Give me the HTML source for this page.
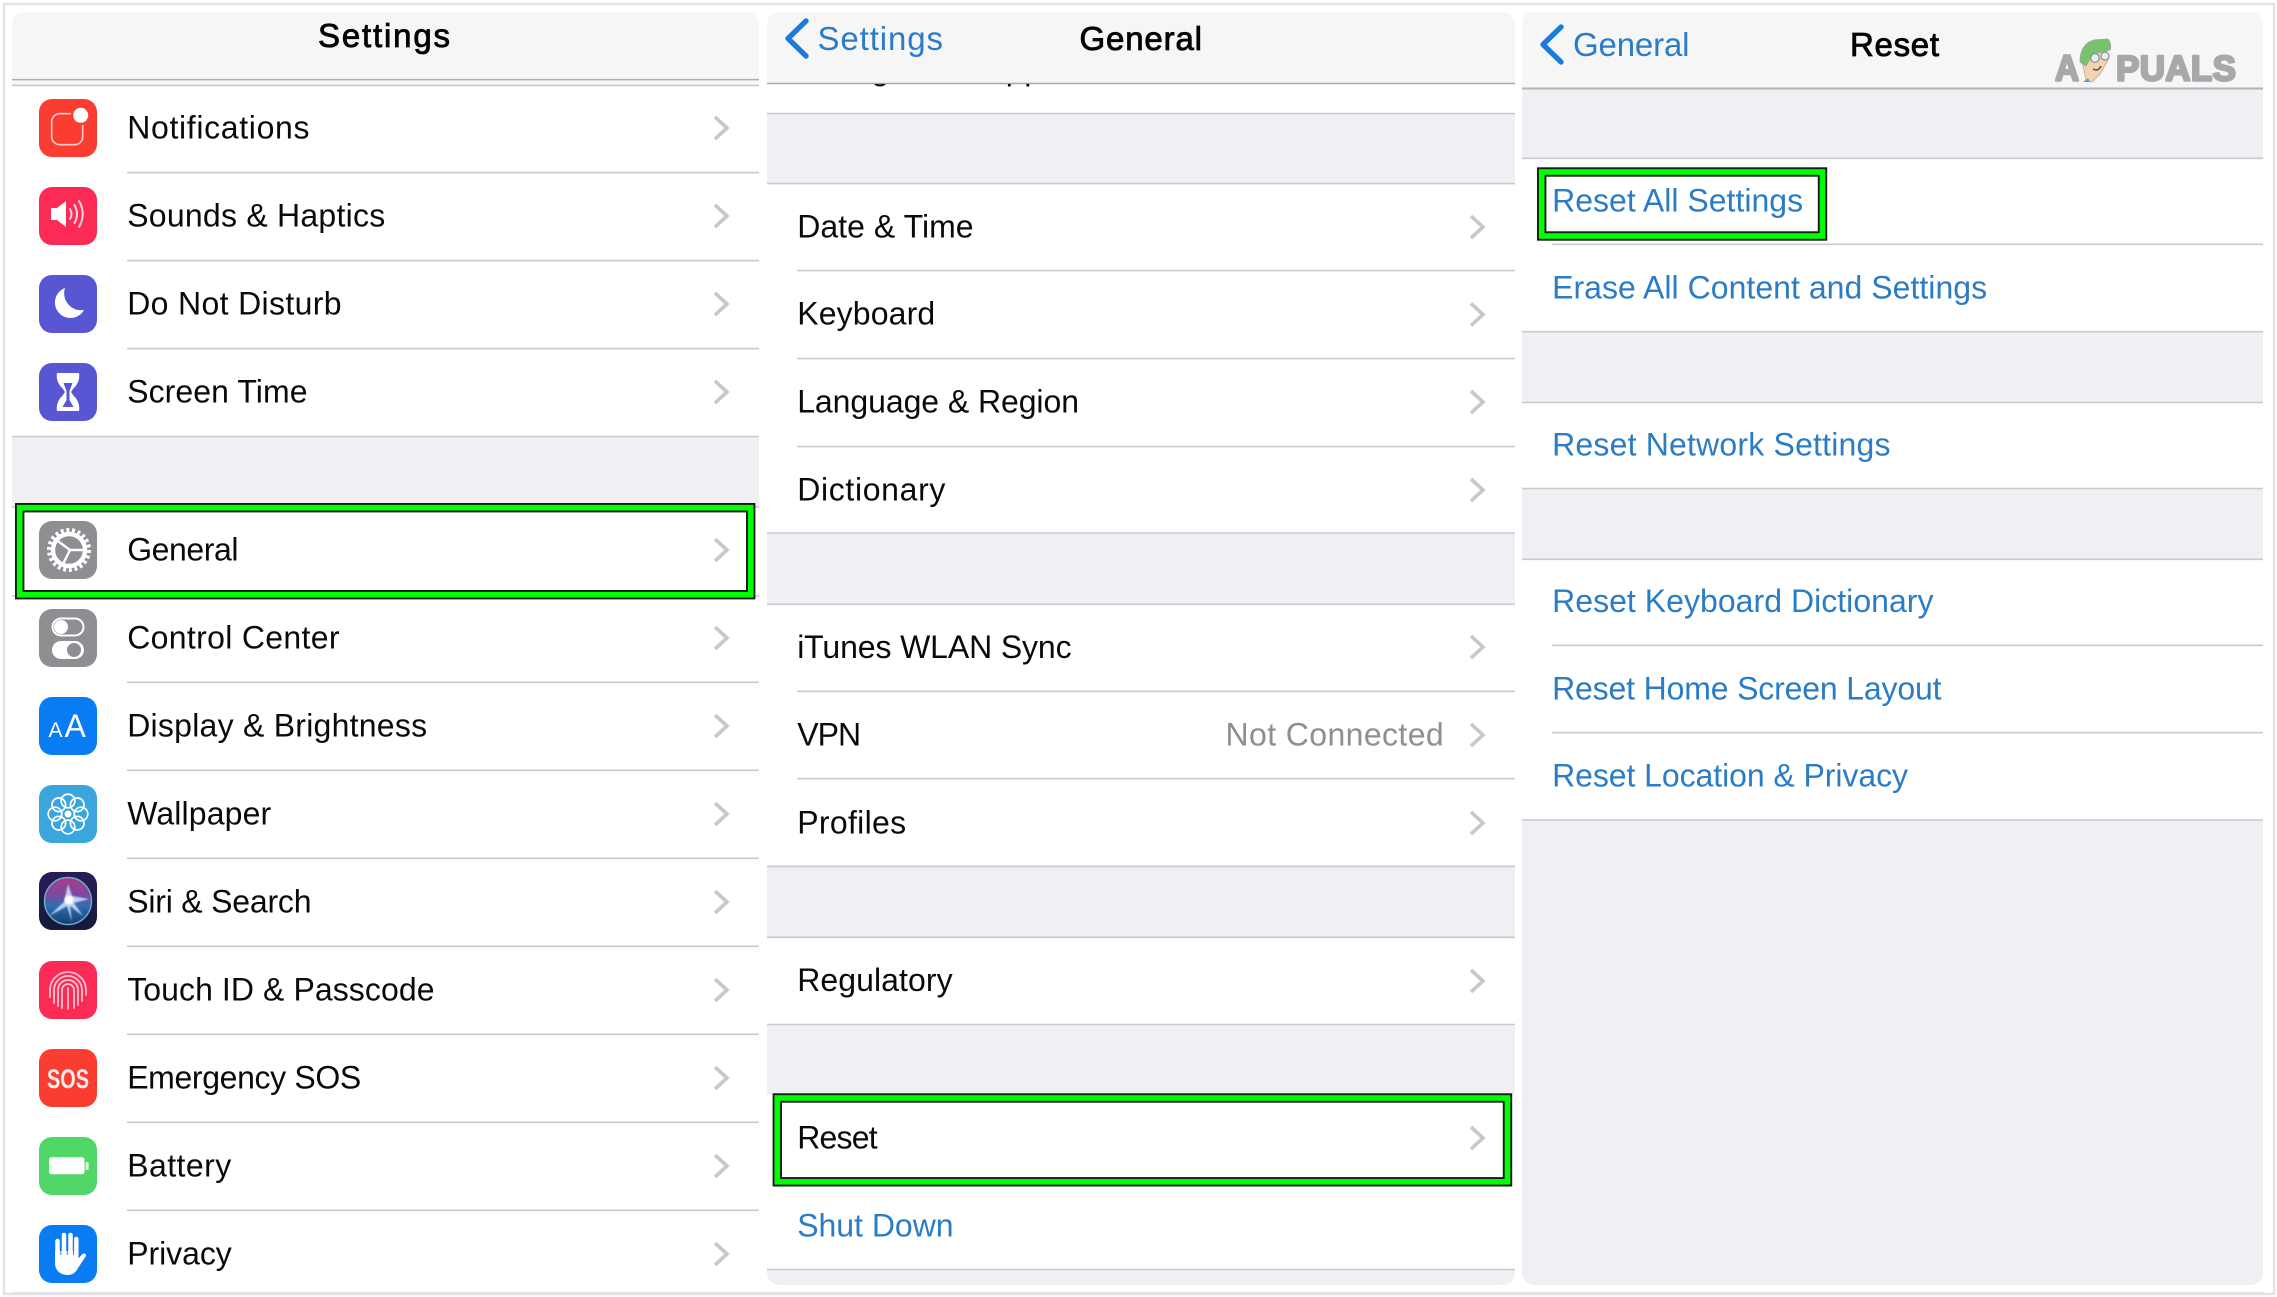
<!DOCTYPE html>
<html lang="en"><head><meta charset="utf-8"><title>iPhone Reset Settings</title>
<style>
html,body{margin:0;padding:0;background:#fff;width:2277px;height:1297px;overflow:hidden}
svg{display:block;font-family:"Liberation Sans",sans-serif}
.t{font-size:32px;fill:#0a0a0a}
.b{font-size:32px;fill:#2b7cc6}
.h{font-size:33px;fill:#050505;stroke:#050505;stroke-width:.85px}
.l{stroke:#c9c9ce;stroke-width:1.6;fill:none}
.c{stroke:#c7c7cc;stroke-width:3.6;fill:none}
.w{fill:none;stroke:#fff}
</style></head><body>
<svg width="2277" height="1297" viewBox="0 0 2277 1297" xmlns="http://www.w3.org/2000/svg">
<defs>
<clipPath id="cp2"><rect x="767" y="84" width="748" height="8"/></clipPath>
<linearGradient id="siri" x1="0" y1="0" x2="0" y2="1"><stop offset="0" stop-color="#a83a8c"/><stop offset=".38" stop-color="#7c4aa0"/><stop offset=".6" stop-color="#2f6fb0"/><stop offset="1" stop-color="#163c70"/></linearGradient>
<linearGradient id="sirib" x1="0" y1="0" x2="0" y2="1"><stop offset="0" stop-color="#2a1c58"/><stop offset="1" stop-color="#141a3a"/></linearGradient>
<filter id="soft" x="-30%" y="-30%" width="160%" height="160%"><feGaussianBlur stdDeviation=".8"/></filter>
</defs>
<rect width="2277" height="1297" fill="#fff"/>
<!-- outer frame -->
<path d="M4 1294V4H2274V1294H4Z" fill="none" stroke="#e3e3e5" stroke-width="2.4"/>

<!-- panel 1 -->
<path d="M12 1293V26Q12 12 26 12H745Q759 12 759 26V1293Z" fill="#fff"/>
<path d="M12 80V26Q12 12 26 12H745Q759 12 759 26V80Z" fill="#f6f6f7"/>
<rect x="12" y="80" width="747" height="5" fill="#f7f7f8"/>
<line x1="12" x2="759" y1="79.6" y2="79.6" stroke="#aeaeb2" stroke-width="1.5"/>
<line x1="12" x2="759" y1="85.4" y2="85.4" class="l"/>
<rect x="12" y="436.5" width="747" height="70.5" fill="#efeff4"/>
<line x1="12" x2="759" y1="436.5" y2="436.5" class="l"/>
<line x1="12" x2="759" y1="507" y2="507" class="l"/>
<line x1="12" x2="759" y1="596" y2="596" class="l"/>
<path class="l" d="M127 172.6H759M127 260.6H759M127 348.6H759M127 682.3H759M127 770.3H759M127 858.3H759M127 946.3H759M127 1034.3H759M127 1122.3H759M127 1210.3H759"/>
<line x1="12" x2="2264" y1="1293" y2="1293" stroke="#e3e3e5" stroke-width="2"/>

<text class="h" x="318" y="47" textLength="132">Settings</text>
<text class="t" x="127.2" y="138.6" textLength="182.3">Notifications</text>
<text class="t" x="127.2" y="226.6" textLength="258">Sounds &amp; Haptics</text>
<text class="t" x="127.2" y="314.6" textLength="214.3">Do Not Disturb</text>
<text class="t" x="127.2" y="402.6" textLength="180.3">Screen Time</text>
<text class="t" x="127.2" y="560.6" textLength="111.3">General</text>
<text class="t" x="127.2" y="648.6" textLength="212.3">Control Center</text>
<text class="t" x="127.2" y="736.6" textLength="299.9">Display &amp; Brightness</text>
<text class="t" x="127.2" y="824.6" textLength="144">Wallpaper</text>
<text class="t" x="127.2" y="912.6" textLength="184.3">Siri &amp; Search</text>
<text class="t" x="127.2" y="1000.6" textLength="307.3">Touch ID &amp; Passcode</text>
<text class="t" x="127.2" y="1088.6" textLength="234">Emergency SOS</text>
<text class="t" x="127.2" y="1176.6" textLength="104">Battery</text>
<text class="t" x="127.2" y="1264.6" textLength="104.6">Privacy</text>
<path class="c" d="M715 117L727 128L715 139M715 205L727 216L715 227M715 293L727 304L715 315M715 381L727 392L715 403M715 539L727 550L715 561M715 627L727 638L715 649M715 715L727 726L715 737M715 803L727 814L715 825M715 891L727 902L715 913M715 979L727 990L715 1001M715 1067L727 1078L715 1089M715 1155L727 1166L715 1177M715 1243L727 1254L715 1265"/>

<!-- icons -->
<g transform="translate(39,99)"><rect width="58" height="58" rx="13" fill="#fb3c30"/><rect x="12.7" y="14.7" width="31" height="31" rx="8" fill="none" stroke="#ffd0cc" stroke-width="1.6"/><circle cx="41.7" cy="16.3" r="10" fill="#fb3c30"/><circle cx="41.7" cy="16.3" r="7.5" fill="#fff"/></g>
<g transform="translate(39,187)"><rect width="58" height="58" rx="13" fill="#fc2b55"/><path d="M12 21H18L27 14V40L18 33H12Z" fill="#fff"/><g fill="none" stroke="#ffd5dd" stroke-width="2" stroke-linecap="round"><path d="M31 22Q34 27 31 32"/><path d="M35.5 18Q40.5 27 35.5 36"/><path d="M40 14Q47.5 27 40 40"/></g></g>
<g transform="translate(39,275)"><rect width="58" height="58" rx="13" fill="#5856d2"/><path d="M26 13A15.5 15.500 0 1 0 45 35A17 17 0 0 1 26 13Z" fill="#fff"/></g>
<g transform="translate(39,363)"><rect width="58" height="58" rx="13" fill="#5856d2"/><path d="M18 10H40Q41.5 19 34 26L32 29L34 32Q41.5 39 40 48H18Q16.5 39 24 32L26 29L24 26Q16.5 19 18 10Z" fill="#fff"/><path d="M24.5 20H33.5L30.5 28V37L34.5 44H23.5L27.5 37V28Z" fill="#5856d2"/></g>
<g transform="translate(39,521)"><rect width="58" height="58" rx="13" fill="#8e8e93"/><circle cx="30" cy="29" r="19.5" class="w" stroke-width="5" stroke-dasharray="2.9 2.67"/><circle cx="30" cy="29" r="16" class="w" stroke-width="4.4"/><path class="w" stroke-width="2.4" d="M31 29H45M31 29L18 19.500M31 29L24 43"/></g>
<g transform="translate(39,609)"><rect width="58" height="58" rx="13" fill="#8e8e93"/><rect x="13.5" y="9.5" width="31" height="17" rx="8.5" fill="none" stroke="#fff" stroke-width="2"/><circle cx="22" cy="18" r="7" fill="#fff"/><rect x="13" y="32" width="32" height="18" rx="9" fill="#fff"/><circle cx="35" cy="41" r="7" fill="#8e8e93"/></g>
<g transform="translate(39,697)"><rect width="58" height="58" rx="13" fill="#0a7cf3"/><text x="9.5" y="40" font-size="21" fill="#fff">A</text><text x="25.5" y="40" font-size="32" fill="#fff">A</text></g>
<g transform="translate(39,785)"><rect width="58" height="58" rx="13" fill="#3aa6dc"/><g class="w" stroke-width="1.7"><circle cx="29" cy="16" r="6.8"/><circle cx="29" cy="42" r="6.8"/><circle cx="16" cy="29" r="6.8"/><circle cx="42" cy="29" r="6.8"/><circle cx="19.8" cy="19.8" r="6.8"/><circle cx="38.2" cy="19.8" r="6.8"/><circle cx="19.8" cy="38.2" r="6.8"/><circle cx="38.2" cy="38.2" r="6.8"/></g><circle cx="29" cy="29" r="3.5" fill="#fff"/></g>
<g transform="translate(39,872)"><rect width="58" height="58" rx="13" fill="url(#sirib)"/><circle cx="29" cy="29" r="23.5" fill="url(#siri)" stroke="#6ab0c8" stroke-width="1.4"/><path d="M29 12L33 24L50 27L35 31L44 44L31 34L33 50L28 34L10 44L25 30Z" fill="#cfe6ff" opacity=".85" filter="url(#soft)"/><circle cx="30" cy="28" r="4.5" fill="#fff" filter="url(#soft)"/></g>
<g transform="translate(39,961)"><rect width="58" height="58" rx="13" fill="#fc2b55"/><g fill="none" stroke="#ffc2cf" stroke-width="1.8" stroke-linecap="round"><path d="M11 36V29A18 18 0 0 1 47 29V34"/><path d="M15 42V29A14 14 0 0 1 43 29V40"/><path d="M19 45V29A10 10 0 0 1 39 29V44"/><path d="M23 47V29A6 6 0 0 1 35 29V47"/><path d="M29 27V48"/></g></g>
<g transform="translate(39,1049)"><rect width="58" height="58" rx="13" fill="#fb3c30"/><text x="8" y="39" font-size="27" font-weight="700" fill="#ffeeec" textLength="42" lengthAdjust="spacingAndGlyphs">SOS</text></g>
<g transform="translate(39,1137)"><rect width="58" height="58" rx="13" fill="#50d768"/><rect x="10" y="20.3" width="35.5" height="17" rx="2.5" fill="#fff"/><rect x="46.5" y="25" width="3.2" height="8" rx="1" fill="#d8f5dd"/></g>
<g transform="translate(39,1225)"><rect width="58" height="58" rx="13" fill="#0a7cf3"/><path d="M16 28V38C16 46 22 50 28.5 50C34 50 37 47 39 43L47 31C47.5 29 45 27.5 43 29.5L39 34V26H16Z" fill="#fff"/><g stroke="#fff" stroke-width="4.500" stroke-linecap="round"><path d="M18.5 16V30"/><path d="M25 10V30"/><path d="M31.5 10V30"/><path d="M37.3 14V33"/></g><g stroke="#0a7cf3" stroke-width=".9"><path d="M21.8 14V30M28.3 12V30M34.5 14V30"/></g></g>

<!-- green box 1 -->
<rect x="19.7" y="507.7" width="731" height="87" fill="none" stroke="#1a1a1a" stroke-width="9.4"/>
<rect x="19.7" y="507.7" width="731" height="87" fill="none" stroke="#00ff00" stroke-width="5.6"/>

<!-- panel 2 -->
<path d="M767 1271V26Q767 12 781 12H1501Q1515 12 1515 26V1271Z" fill="#fff"/>
<path d="M767 84V26Q767 12 781 12H1501Q1515 12 1515 26V84Z" fill="#f6f6f7"/>
<line x1="767" x2="1515" y1="83.5" y2="83.5" stroke="#a8a8ac" stroke-width="1.5"/>
<text class="t" x="797.2" y="80" textLength="372" clip-path="url(#cp2)">Background App Refresh</text>
<rect x="767" y="113.5" width="748" height="70" fill="#efeff4"/>
<rect x="767" y="533" width="748" height="71.3" fill="#efeff4"/>
<rect x="767" y="866.3" width="748" height="71" fill="#efeff4"/>
<rect x="767" y="1024.5" width="748" height="70" fill="#efeff4"/>
<path d="M767 1269.5H1515V1271Q1515 1285 1501 1285H781Q767 1285 767 1271Z" fill="#efeff4"/>
<path class="l" d="M767 113.5H1515M767 183.6H1515M797 270.6H1515M797 358.6H1515M797 446.6H1515M767 533H1515M767 604.3H1515M797 691.3H1515M797 778.7H1515M767 866.3H1515M767 937.3H1515M767 1024.5H1515M767 1269.5H1515"/>
<path d="M806 21L788 38.500L806 56" fill="none" stroke="#1a7bdc" stroke-width="5.4" stroke-linecap="round" stroke-linejoin="round"/>
<text class="b" x="817.5" y="50" textLength="125.5" style="font-size:33px">Settings</text>
<text class="h" x="1079.5" y="50" textLength="122.5">General</text>
<text class="t" x="797.2" y="237.6" textLength="176.4">Date &amp; Time</text>
<text class="t" x="797.2" y="324.7" textLength="138">Keyboard</text>
<text class="t" x="797.2" y="412.7" textLength="281.8">Language &amp; Region</text>
<text class="t" x="797.2" y="500.3" textLength="148.2">Dictionary</text>
<text class="t" x="797.2" y="658" textLength="274.4">iTunes WLAN Sync</text>
<text class="t" x="797.2" y="745.7" textLength="63.9">VPN</text>
<text class="t" x="1225.5" y="745.7" textLength="218.2" style="fill:#8e8e93">Not Connected</text>
<text class="t" x="797.2" y="833.5" textLength="108.9">Profiles</text>
<text class="t" x="797.2" y="991.2" textLength="155.4">Regulatory</text>
<text class="t" x="797.2" y="1148.5" textLength="80.4">Reset</text>
<text class="b" x="797.2" y="1236.5" textLength="156.4">Shut Down</text>
<path class="c" d="M1471 216L1483 227L1471 238M1471 303.5L1483 314.5L1471 325.5M1471 391L1483 402L1471 413M1471 479L1483 490L1471 501M1471 636L1483 647L1471 658M1471 724L1483 735L1471 746M1471 812L1483 823L1471 834M1471 970L1483 981L1471 992M1471 1127L1483 1138L1471 1149"/>
<rect x="777.3" y="1098" width="730.2" height="83.8" fill="none" stroke="#1a1a1a" stroke-width="9.4"/>
<rect x="777.3" y="1098" width="730.2" height="83.8" fill="none" stroke="#00ff00" stroke-width="5.6"/>

<!-- panel 3 -->
<path d="M1522 1271V26Q1522 12 1536 12H2249Q2263 12 2263 26V1271Q2263 1285 2249 1285H1536Q1522 1285 1522 1271Z" fill="#efeff4"/>
<path d="M1522 89V26Q1522 12 1536 12H2249Q2263 12 2263 26V89Z" fill="#f6f6f7"/>
<line x1="1522" x2="2263" y1="88.5" y2="88.5" stroke="#b4b4b8" stroke-width="2"/>
<rect x="1522" y="158.3" width="741" height="173.4" fill="#fff"/>
<rect x="1522" y="402.5" width="741" height="86" fill="#fff"/>
<rect x="1522" y="559.3" width="741" height="260.7" fill="#fff"/>
<path class="l" d="M1522 158.3H2263M1552 244.3H2263M1522 331.7H2263M1522 402.5H2263M1522 488.5H2263M1522 559.3H2263M1552 645.3H2263M1552 732.700H2263M1522 820H2263"/>
<path d="M1561 27L1543 44.500L1561 62" fill="none" stroke="#1a7bdc" stroke-width="5.4" stroke-linecap="round" stroke-linejoin="round"/>
<text class="b" x="1573" y="56" textLength="116.5" style="font-size:33px">General</text>
<text class="h" x="1850" y="56" textLength="89">Reset</text>
<text class="b" x="1552.1" y="211.5" textLength="251">Reset All Settings</text>
<text class="b" x="1552.1" y="298.7" textLength="435">Erase All Content and Settings</text>
<text class="b" x="1552.1" y="455.5" textLength="338.4">Reset Network Settings</text>
<text class="b" x="1552.1" y="612.2" textLength="381.4">Reset Keyboard Dictionary</text>
<text class="b" x="1552.1" y="699.5" textLength="389.4">Reset Home Screen Layout</text>
<text class="b" x="1552.1" y="786.5" textLength="355.9">Reset Location &amp; Privacy</text>
<rect x="1541.7" y="172" width="280.8" height="64" fill="none" stroke="#1a1a1a" stroke-width="9.4"/>
<rect x="1541.7" y="172" width="280.8" height="64" fill="none" stroke="#00ff00" stroke-width="5.6"/>

<!-- watermark -->
<g>
<text x="2055" y="80.5" font-size="36" font-weight="700" fill="#a8a8aa" stroke="#a8a8aa" stroke-width="2.4" stroke-linejoin="round" textLength="24" lengthAdjust="spacingAndGlyphs">A</text>
<text x="2116" y="80.5" font-size="35" font-weight="700" fill="#a8a8aa" stroke="#a8a8aa" stroke-width="2.4" stroke-linejoin="round" textLength="120">PUALS</text>
<path d="M2082 60L2086 80L2092 82L2100 74L2108 60L2106 50L2090 52Z" fill="#f4d4b0" stroke="#c8a884" stroke-width=".8"/>
<path d="M2080 62Q2080 44 2094 40L2108 39Q2112 44 2110 50L2093 54L2086 66Z" fill="#77c16f" stroke="#a0a8a0" stroke-width=".9"/>
<circle cx="2095" cy="58" r="4.300" fill="#dff0f7" stroke="#8c8c8c" stroke-width="1.2"/>
<circle cx="2105" cy="56" r="4" fill="#dff0f7" stroke="#8c8c8c" stroke-width="1.2"/>
<path d="M2093 69Q2098 72 2101 66" fill="none" stroke="#555" stroke-width="1.5"/>
<path d="M2083 82L2088 78L2090 82Z" fill="#5a9fd0"/>
</g>
</svg>
</body></html>
